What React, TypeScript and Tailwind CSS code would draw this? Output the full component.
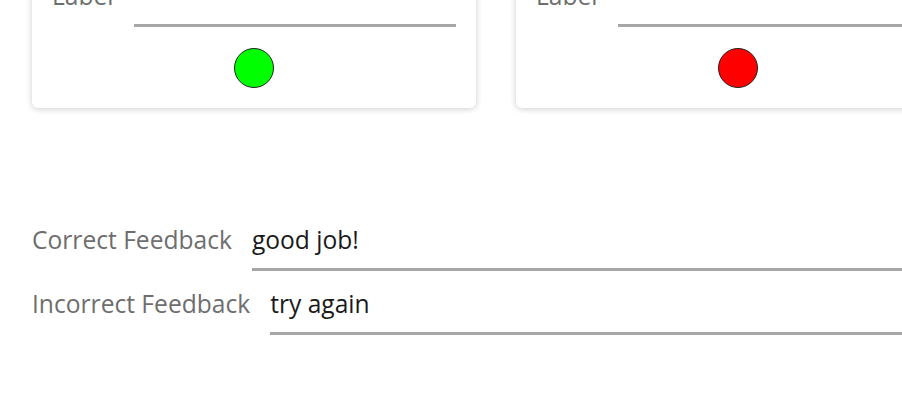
export default function App() {
  const cards = [
    { id: "a", color: "bg-[#00ff00]" },
    { id: "b", color: "bg-[#ff0000]" },
  ];

  return (
    <div
      className="h-[406px] w-[902px] overflow-hidden bg-white"
      style={{ fontFamily: "'Open Sans', sans-serif" }}
    >
      <div className="mt-[-42px] pl-8">
        <div className="flex gap-10">
          {cards.map((card) => (
            <div
              key={card.id}
              className="w-[444px] shrink-0 rounded-md bg-white p-5 shadow-[0_1px_6px_rgba(0,0,0,0.2)]"
            >
              <div className="flex items-baseline gap-5">
                <span className="text-[24.6px] leading-9 text-[#6e6e6e]">Label</span>
                <div className="flex-1 border-b-[3px] border-[#a6a6a6] pb-[10px] text-[24.6px] leading-9">
                  &nbsp;
                </div>
              </div>
              <div className="mt-[21px] flex justify-center">
                <span
                  className={`h-10 w-10 rounded-full border border-[#222] ${card.color}`}
                />
              </div>
            </div>
          ))}
        </div>

        <div className="mt-[114px] flex flex-col gap-[15px]">
          <div className="flex items-baseline gap-5">
            <span className="text-[24.6px] leading-9 text-[#6e6e6e]">
              Correct Feedback
            </span>
            <div className="flex-1 border-b-[3px] border-[#a6a6a6] pb-[10px] text-[24.6px] leading-9 text-[#1a1a1a]">
              good job!
            </div>
          </div>
          <div className="flex items-baseline gap-5">
            <span className="text-[24.6px] leading-9 text-[#6e6e6e]">
              Incorrect Feedback
            </span>
            <div className="flex-1 border-b-[3px] border-[#a6a6a6] pb-[10px] text-[24.6px] leading-9 text-[#1a1a1a]">
              try again
            </div>
          </div>
        </div>
      </div>
    </div>
  );
}
